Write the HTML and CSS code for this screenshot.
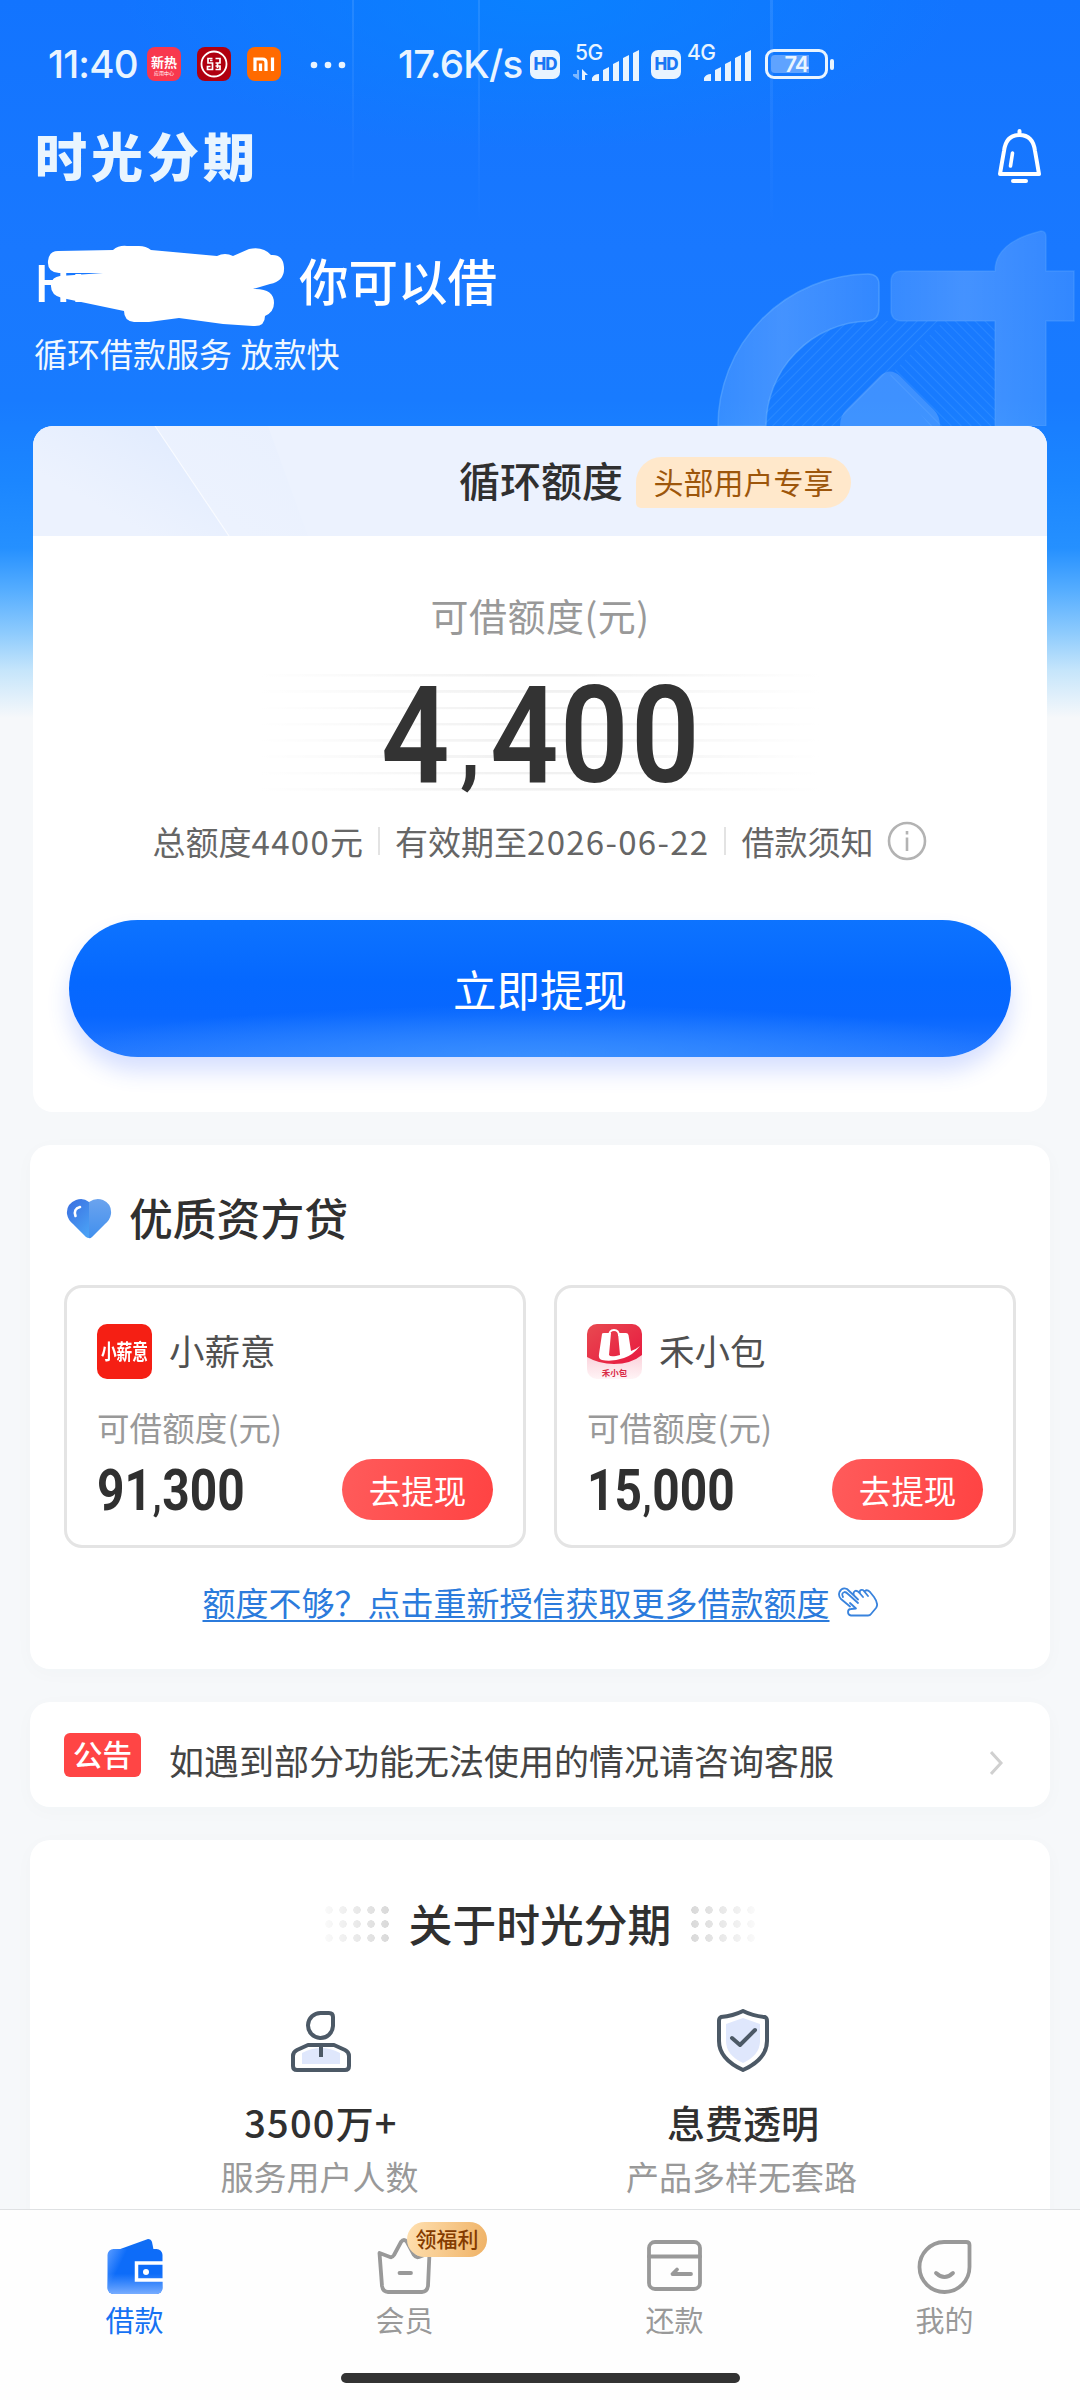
FILE: index.html
```html
<!DOCTYPE html>
<html lang="zh-CN">
<head>
<meta charset="utf-8">
<title>时光分期</title>
<link rel="stylesheet" href="styles.css">
</head>
<body>
<div class="screen">
  <svg class="backdrop" width="1080" height="426" viewBox="0 0 1080 426">
    <defs>
      <linearGradient id="ray" x1="0" y1="0" x2="0" y2="1"><stop offset="0" stop-color="#fff" stop-opacity=".1"/><stop offset="1" stop-color="#fff" stop-opacity="0"/></linearGradient>
      <linearGradient id="mark" x1="0" y1="0" x2="1" y2="0"><stop offset="0" stop-color="#fff" stop-opacity=".13"/><stop offset=".4" stop-color="#fff" stop-opacity=".19"/><stop offset="1" stop-color="#fff" stop-opacity=".11"/></linearGradient>
      <pattern id="hatchA" width="7" height="7" patternUnits="userSpaceOnUse" patternTransform="rotate(45)"><path d="M0 0V7" stroke="#4aa0ff" stroke-width="2" opacity=".35"/></pattern>
      <pattern id="hatchB" width="7" height="7" patternUnits="userSpaceOnUse" patternTransform="rotate(-45)"><path d="M0 0V7" stroke="#4aa0ff" stroke-width="2" opacity=".32"/></pattern>
    </defs>
    <rect x="352" width="2" height="190" fill="url(#ray)"/>
    <rect x="478" width="2" height="225" fill="url(#ray)"/>
    <rect x="770" width="3" height="225" fill="url(#ray)"/>
    <path d="M765 426A105 105 0 0 1 870 321H944L839 426Z" fill="url(#hatchA)"/>
    <path d="M944 321H995V426H930L890 375Z" fill="url(#hatchB)"/>
    <path d="M718 426A152 152 0 0 1 868 274Q879 274 879 285V308Q879 320 868 321A105 105 0 0 0 766 426Z" fill="url(#mark)" stroke="#65b0ff" stroke-opacity=".5" stroke-width="1.5"/>
    <path d="M902 271H995Q995 242 1041 231Q1046 231 1046 237V271H1074V321H1046V426H995V321H902Q891 321 891 310V282Q891 271 902 271Z" fill="url(#mark)" stroke="#65b0ff" stroke-opacity=".28" stroke-width="1.5"/>
    <path d="M840 426Q840 416 846 410L880 376Q890 367 900 376L934 410Q940 416 940 426Z" fill="#fff" fill-opacity=".17"/>
  </svg>

  <div class="status">
    <span class="clock">11:40</span>
    <span class="app app-news"><b>新热</b><i>应用中心</i></span>
    <svg class="app-svg" width="34" height="34" viewBox="0 0 34 34"><rect width="34" height="34" rx="8" fill="#b0000f"/><circle cx="17" cy="17" r="12.5" fill="none" stroke="#fff" stroke-width="1.8"/><path d="M15.500 11.500H11V16H15.500V22.500H10.500V19.500H13.500M18.500 11.500H23V16H18.500M18.500 19H23V22.500H18.500M13 13.500H15.500M20.500 21V16" fill="none" stroke="#fff" stroke-width="1.700"/></svg>
    <svg class="app-svg" width="34" height="34" viewBox="0 0 34 34"><rect width="34" height="34" rx="8" fill="#ff6a00"/><path d="M8 24V12H15.500Q19 12 19 15.500V24M13.500 16.500V24M25.500 10.500V24" fill="none" stroke="#fff" stroke-width="3.200"/></svg>
    <svg class="more" width="36" height="8" viewBox="0 0 36 8"><circle cx="4" cy="4" r="3.300"/><circle cx="18" cy="4" r="3.300"/><circle cx="32" cy="4" r="3.300"/></svg>
    <span class="speed">17.6K/s</span>
    <span class="hd">HD</span>
    <span class="net net-5g">5G
      <svg class="bars" width="66" height="31" viewBox="0 0 66 31"><path d="M4 20L6 20V30L0 26V24H4Z" opacity=".5"/><path d="M9 19L15 25H12V30H9Z"/><path d="M19 31V28Q21 24 26 24V31ZM30 20L36 17V31H30ZM40 14L46 11V31H40ZM50 8L56 5V31H50ZM60 3L66 0V31H60Z"/></svg></span>
    <span class="hd hd-2">HD</span>
    <span class="net net-4g">4G
      <svg class="bars" width="66" height="31" viewBox="0 0 66 31"><path d="M19 31V28Q21 24 26 24V31ZM30 20L36 17V31H30ZM40 14L46 11V31H40ZM50 8L56 5V31H50ZM60 3L66 0V31H60Z"/></svg></span>
    <span class="battery"><span>74</span></span><span class="battery-cap"></span>
  </div>

  <header class="brand">
    <h1 class="logo">时光分期</h1>
    <svg width="45" height="55" viewBox="0 0 45 55" fill="none" stroke="#fff" stroke-width="4" stroke-linejoin="round" stroke-linecap="round"><path d="M22.500 2V6M3 45Q5 33 7 22Q9 6 22.500 6Q36 6 38 22Q40 33 42 45Z"/><path d="M15.500 24L13.500 37" stroke-width="3.600"/><path d="M16 52H29"/></svg>
  </header>

  <section class="hello">
    <div class="greeting">
      <span class="hi">Hi</span><span>你可以借</span>
      <svg class="redaction" width="240" height="84" viewBox="0 0 240 84"><path d="M11 6L66 5Q72 0 80 1H92Q99 1 104 5L170 11Q178 7 186 11L202 4Q216 1 224 10Q236 9 237 22Q238 36 223 39L206 44Q227 43 227 58Q227 67 218 71Q218 82 206 81L176 79L132 73L102 77H87Q77 76 77 66L15 53Q3 50 4 39Q5 32 13 31L56 28H12Q0 27 1 16Q2 6 11 6Z" fill="#fff"/></svg>
    </div>
    <p class="slogan">循环借款服务 放款快</p>
  </section>

  <section class="quota">
    <div class="quota-head">
      <svg class="sheen" width="300" height="110" viewBox="0 0 300 110"><defs><linearGradient id="sh" x1="0" y1="1" x2="1" y2="0"><stop offset=".3" stop-color="#d9e6ff" stop-opacity="0"/><stop offset="1" stop-color="#d3e3fe"/></linearGradient></defs><path d="M0 0H122L196 110H0Z" fill="url(#sh)" opacity=".6"/><path d="M122 0H235L275 110H196Z" fill="url(#sh)" opacity=".15"/><path d="M122 0L196 110" stroke="#fff" stroke-width="1.200" opacity=".7"/></svg>
      <h2>循环额度</h2><span class="vip">头部用户专享</span>
    </div>
    <p class="quota-label">可借额度(元)</p>
    <div class="quota-sum"><span>4</span><span class="comma">,</span><span>4</span><span>0</span><span>0</span></div>
    <div class="quota-info">
      <span>总额度<em>4400</em>元</span><i></i><span>有效期至<em>2026-06-22</em></span><i></i><span>借款须知</span>
      <svg width="40" height="40" viewBox="0 0 40 40" fill="none" stroke="#b3b3b3" stroke-width="2.600"><circle cx="20" cy="20" r="18"/><path d="M20 16.500V30M20 10V13.500"/></svg>
    </div>
    <button class="withdraw">立即提现</button>
  </section>

  <section class="panel lenders">
    <div class="panel-title">
      <svg width="46" height="42" viewBox="0 0 46 42"><defs><linearGradient id="h1" x1="0" y1="0" x2=".7" y2="1"><stop offset="0" stop-color="#3a6ee0"/><stop offset="1" stop-color="#4aa0f5"/></linearGradient><linearGradient id="h2" x1="0" y1="0" x2="0" y2="1"><stop offset="0" stop-color="#6ba3ee"/><stop offset="1" stop-color="#4190ee"/></linearGradient></defs><path d="M23 4Q17-1 10 2Q0 6 1 16Q2 22 7 26L20 39Q23 41 25 39V4Z" fill="url(#h1)"/><path d="M23 4Q30-1 37 2Q46 6 45 16Q44 22 39 26L26 39Q24 41 23 40Z" fill="url(#h2)"/><path d="M14 9Q7 11 9.500 18" stroke="#fff" stroke-width="2.600" fill="none" stroke-linecap="round"/></svg>
      <h2>优质资方贷</h2>
    </div>
    <div class="lender-grid">
      <article class="lender">
        <div class="lender-name"><span class="lender-icon"><b>小薪意</b></span><h3>小薪意</h3></div>
        <p>可借额度(元)</p>
        <div class="lender-foot"><strong>91<u>,</u>300</strong><button>去提现</button></div>
      </article>
      <article class="lender">
        <div class="lender-name"><svg width="55" height="55" viewBox="0 0 55 55"><defs><clipPath id="rr"><rect width="55" height="55" rx="10"/></clipPath><linearGradient id="rd" x1="0" y1="0" x2="1" y2="1"><stop offset="0" stop-color="#e84a50"/><stop offset="1" stop-color="#e8173f"/></linearGradient><linearGradient id="pk" x1="0" y1="0" x2="0" y2="1"><stop offset=".6" stop-color="#fbd5dd"/><stop offset="1" stop-color="#fff4f6"/></linearGradient></defs><g clip-path="url(#rr)"><rect width="55" height="55" fill="url(#pk)"/><path d="M0 0H55V31Q44 40 27 40Q12 40 0 33Z" fill="url(#rd)"/></g><path d="M15 10Q15 9 17 9H24L22 31Q23 33 29 32L33 31L31 9H39Q41 9 41.500 11L44 27Q48 26 53 22Q46 31 37 34Q25 38 15 36Q11 35 12 30Z" fill="#fff"/><path d="M22 12Q22 6 27 6Q32 6 32 12" fill="none" stroke="#fff" stroke-width="1.800"/><text x="27.500" y="52" text-anchor="middle" class="tiny">禾小包</text></svg><h3>禾小包</h3></div>
        <p>可借额度(元)</p>
        <div class="lender-foot"><strong>15<u>,</u>000</strong><button>去提现</button></div>
      </article>
    </div>
    <div class="more-quota"><a>额度不够？点击重新授信获取更多借款额度</a>
      <svg width="40" height="30" viewBox="0 0 40 30" fill="none" stroke="#3983dd" stroke-width="1.800" stroke-linecap="round" stroke-linejoin="round"><path d="M12 19.500L3 12Q0 9 1.500 5Q4 0 9 2L17 9.500M5 10Q3 6 6.500 5Q8 5 10 7L20 16M17 9.500Q14 6 17 4Q19 3 22 6.500M22 6.500Q21 2 25 3L28 6.500M27 4Q29 2 32 5L36 10Q41 17 38 21L33 27Q32 28.500 30 28.500H13Q10 28 10 25Q10 22 13 22L18 21.500L12 16M17 9.500L20 12.500M22 6.500L25 10M28 6.500L30 9"/></svg>
    </div>
  </section>

  <section class="panel notice">
    <span class="tag">公告</span><p>如遇到部分功能无法使用的情况请咨询客服</p>
    <svg width="14" height="26" viewBox="0 0 14 26" fill="none" stroke="#d0d0d0" stroke-width="3"><path d="M1 2L11 13L1 24"/></svg>
  </section>

  <section class="panel about">
    <div class="about-title"><span class="dots"></span><h2>关于时光分期</h2><span class="dots dots-right"></span></div>
    <div class="features">
      <div class="feature">
        <svg width="60" height="64" viewBox="0 0 60 64" fill="none" stroke="#4c5966" stroke-width="4" stroke-linejoin="round"><path d="M30 4H38Q42 4 42 8V17A12.500 12.500 0 1 1 30 4Z"/><path d="M11 44Q30 34 49 44V55H11Z" fill="#dfe7fc" stroke="none"/><path d="M17 36H43L54 41Q58 43 58 47V57Q58 61 54 61H6Q2 61 2 57V47Q2 43 6 41ZM30 36V48"/></svg>
        <h3 class="count">3500万+</h3><p>服务用户人数</p>
      </div>
      <div class="feature">
        <svg width="60" height="64" viewBox="0 0 60 64" fill="none" stroke="#4c5966" stroke-width="4" stroke-linejoin="round" stroke-linecap="round"><path d="M30 9L47 15V32Q47 46 30 54Q13 46 13 32V15Z" fill="#dfe7fc" stroke="none"/><path d="M30 2Q40 7 52 8Q54 9 54 12V32Q54 50 30 61Q6 50 6 32V12Q6 9 8 8Q20 7 30 2Z"/><path d="M19 29L27 36L42 21"/></svg>
        <h3>息费透明</h3><p>产品多样无套路</p>
      </div>
    </div>
  </section>

  <nav class="tabbar">
    <div class="tabs">
      <div class="tab active">
        <svg width="58" height="60" viewBox="0 0 58 60"><defs><linearGradient id="w" x1="0" y1=".2" x2=".25" y2=".3"><stop offset="0" stop-color="#4a92ff"/><stop offset="1" stop-color="#0d6cf9"/></linearGradient><linearGradient id="w2" x1="0" y1="0" x2="0" y2="1"><stop offset=".55" stop-color="#69a5ff" stop-opacity="0"/><stop offset="1" stop-color="#78adff"/></linearGradient></defs><path d="M6 16L42 3Q45 3 46 6L48 16Z" fill="#0f6df5"/><rect x="1.500" y="13" width="55" height="45" rx="6" fill="url(#w)"/><rect x="1.500" y="13" width="55" height="45" rx="6" fill="url(#w2)"/><path d="M57 27H30.500V44H57" fill="none" stroke="#fff" stroke-width="3.500"/><circle cx="40" cy="36" r="3" fill="#fff"/></svg>
        <span>借款</span></div>
      <div class="tab">
        <svg width="58" height="60" viewBox="0 0 58 60" fill="none" stroke="#999" stroke-width="3.800" stroke-linejoin="round" stroke-linecap="round"><path d="M3.500 17L14 21Q16 22 18 19L25 6Q28 2 31 6L38 19Q40 22 43 21L53.500 17L52 50Q51 56 46 56H12Q7 56 6 50Z"/><path d="M23.500 37H35"/></svg>
        <span>会员</span><b class="bubble">领福利</b></div>
      <div class="tab">
        <svg width="58" height="60" viewBox="0 0 58 60" fill="none" stroke="#999" stroke-width="3.800" stroke-linejoin="round" stroke-linecap="round"><rect x="3" y="6" width="51" height="47" rx="6"/><path d="M3 20.500H54M45 38H26.500L31 33.500"/></svg>
        <span>还款</span></div>
      <div class="tab">
        <svg width="58" height="60" viewBox="0 0 58 60" fill="none" stroke="#999" stroke-width="3.800" stroke-linejoin="round" stroke-linecap="round"><path d="M28 6H50Q53.500 6 53.500 9V31A25 25 0 1 1 28 6Z"/><path d="M20 37Q28.500 45 37 37"/></svg>
        <span>我的</span></div>
    </div>
    <div class="home-bar"></div>
  </nav>
</div>
</body>
</html>
```
FILE: styles.css
```css
* { box-sizing: border-box; margin: 0; padding: 0; }
html, body { width: 1080px; height: 2400px; overflow: hidden; }
body { font-family: "Noto Sans CJK SC", sans-serif; color: #303030; }
svg { display: block; flex: none; }
h1, h2, h3 { font-weight: 500; }
button { border: 0; font-family: inherit; color: #fff; display: block; }
em, i { font-style: normal; }

.screen {
  position: relative;
  width: 1080px;
  height: 2400px;
  overflow: hidden;
  display: flex;
  flex-direction: column;
  background:
    radial-gradient(ellipse 420px 150px at 540px 0, rgba(8, 132, 255, .8), rgba(8, 132, 255, 0)),
    linear-gradient(180deg, #1274ff 0, #1978ff 250px, #187bff 400px, #1b86ff 480px, #2590ff 548px, #55adff 590px, #8ccafd 632px, #c5e5fb 670px, #f6f8fa 718px);
}
.backdrop { position: absolute; left: 0; top: 0; }

/* Status bar */
.status { position: relative; height: 128px; padding: 47px 0 0 48px; display: flex; align-items: flex-start; color: #e9f4ff; fill: #e9f4ff; font-family: Inter, sans-serif; }
.clock { width: 99px; font-size: 38.5px; line-height: 35px; font-weight: 500; letter-spacing: -.8px; white-space: nowrap; }
.app { width: 34px; height: 34px; border-radius: 8px; background: #f8384e; color: #fff; font-family: "Noto Sans CJK SC", sans-serif; text-align: center; overflow: hidden; }
.app b { display: block; font-size: 13px; line-height: 17px; padding-top: 6px; font-weight: 700; }
.app i { display: block; font-size: 5px; line-height: 6px; }
.app-svg { margin-left: 16px; }
.more { margin: 14px 0 0 29px; }
.speed { margin-left: 52px; width: 132px; font-size: 38.5px; line-height: 35px; font-weight: 500; letter-spacing: -.7px; white-space: nowrap; }
.hd { width: 30px; height: 29px; margin-top: 3px; border-radius: 7px; background: #e9f4ff; color: #1877f5; font-size: 17px; line-height: 29px; font-weight: 800; text-align: center; letter-spacing: -1px; }
.net { position: relative; width: 65px; height: 36px; font-size: 21px; line-height: 20px; font-weight: 500; letter-spacing: -.6px; margin-top: -4px; }
.net-5g { margin-left: 15px; }
.hd-2 { margin-left: 11px; }
.net-4g { margin-left: 6px; }
.bars { position: absolute; right: 1px; top: 7px; }
.battery { margin: 2px 0 0 13px; width: 63px; height: 30px; border: 3px solid #e9f4ff; border-radius: 9px; padding: 3px; }
.battery span { display: block; height: 18px; border-radius: 4px; background: linear-gradient(90deg, #5fa3ff 74%, transparent 74%); font-size: 22px; line-height: 19px; font-weight: 600; text-align: center; letter-spacing: -1px; }
.battery-cap { width: 4px; height: 11px; margin: 12px 0 0 2px; border-radius: 2px; background: #e9f4ff; }

/* Brand row */
.brand { position: relative; height: 60px; padding: 0 38px 0 35px; display: flex; justify-content: space-between; }
.logo { font-size: 52px; line-height: 53px; font-weight: 900; color: #e9f5ff; letter-spacing: 4px; }
.brand svg { margin-top: 1px; }

.hello { position: relative; height: 238px; padding: 62px 34px 0; color: #fff; }
.greeting { position: relative; display: flex; height: 62px; line-height: 60px; font-size: 49.5px; font-weight: 500; white-space: nowrap; }
.hi { width: 265px; font-size: 50px; }
.redaction { position: absolute; left: 13px; top: -5px; }
.slogan { margin-top: 19px; font-size: 33px; line-height: 44px; color: #f0f8ff; word-spacing: 1px; }

/* Credit card */
.quota { position: relative; margin: 0 33px; height: 686px; border-radius: 20px; overflow: hidden; background: #fff; display: flex; flex-direction: column; align-items: center; }
.quota-head { position: relative; width: 100%; height: 110px; padding-left: 426px; display: flex; align-items: center; background: #ecf2fe; }
.sheen { position: absolute; left: 0; top: 0; }
.quota-head h2 { position: relative; top: -2px; font-size: 41px; line-height: 50px; }
.vip { position: relative; margin: 2px 0 0 13px; width: 215px; height: 51px; border-radius: 26px 26px 26px 5px; background: #ffe8cb; color: #9d560b; font-size: 30px; line-height: 48px; text-align: center; }
.quota-label { margin-top: 55px; font-size: 38px; line-height: 48px; color: #999; letter-spacing: .5px; }
.quota-sum { margin-top: 35px; width: 560px; height: 118px; padding-top: 2px; display: flex; justify-content: center; font-family: Roboto, sans-serif; font-size: 135px; line-height: 120px; font-weight: 600; color: #333;
  background: linear-gradient(90deg, #fff, transparent 45%, transparent 55%, #fff), repeating-linear-gradient(180deg, #f1f1f1 0, #f1f1f1 2px, #fff 3px, #fff 16.300px); }
.quota-sum span { width: 70.5px; display: flex; justify-content: center; transform: scaleX(.89); }
.quota-sum .comma { width: 38px; font-size: 96px; line-height: 134px; }
.quota-info { margin-top: 27px; height: 44px; display: flex; align-items: center; font-size: 33px; color: #666; white-space: nowrap; }
.quota-info span { position: relative; }
.quota-info em { letter-spacing: 1.300px; }
.quota-info i { width: 2px; height: 28px; margin: 0 15px; background: #e3e3e3; }
.quota-info svg { margin-left: 14px; }
.withdraw { margin-top: 57px; width: 942px; height: 137px; border-radius: 69px; font-size: 43.5px; line-height: 131px; text-align: center;
  background: radial-gradient(ellipse 55% 42% at 50% 104%, #3b91ff, rgba(59, 145, 255, 0)), linear-gradient(180deg, #0d73ff, #0568ff 45%, #0867ff 70%, #2377ff);
  box-shadow: 0 14px 22px rgba(50, 95, 255, .2); }

/* White panels */
.panel { position: relative; margin: 33px 30px 0; border-radius: 20px; background: #fff; box-shadow: 0 4px 20px rgba(50, 70, 100, .025); flex: none; }
.lenders { height: 524px; padding: 47px 34px 0; }
.panel-title { display: flex; align-items: center; height: 54px; padding-left: 2px; }
.panel-title h2 { margin-left: 17px; font-size: 43.800px; line-height: 54px; position: relative; top: -2px; }
.lender-grid { margin-top: 39px; display: grid; grid-template-columns: 462px 462px; gap: 28px; }
.lender { height: 263px; border: 3px solid #e4e4e4; border-radius: 18px; padding: 36px 30px 0; }
.lender-name { height: 55px; display: flex; align-items: center; }
.lender-icon { width: 55px; height: 55px; border-radius: 10px; background: #f51f14; color: #fff; line-height: 53px; display: flex; justify-content: center; }
.lender-icon b { flex: none; font-size: 21px; font-weight: 700; transform: scaleX(.75); }
.lender-name h3 { margin-left: 17px; font-size: 35.500px; font-weight: 400; line-height: 50px; color: #505050; position: relative; top: -2px; }
.tiny { font-size: 8.500px; font-weight: 700; fill: #d92a45; }
.lender p { margin-top: 26px; font-size: 32.500px; line-height: 44px; color: #999; letter-spacing: .1px; }
.lender-foot { margin-top: 10px; display: flex; justify-content: space-between; height: 61px; }
.lender-foot strong { width: 170px; font-family: Roboto, sans-serif; font-weight: 700; font-size: 57px; line-height: 64px; color: #303030; transform: scaleX(.84); transform-origin: left; }
.lender-foot u { text-decoration: none; font-size: 42px; margin: 0 1px; }
.lender-foot button { width: 151px; height: 61px; border-radius: 31px; background: linear-gradient(100deg, #ff5b5b, #ff4343); font-size: 32.500px; line-height: 55px; text-align: center; }
.more-quota { margin-top: 30px; height: 48px; display: flex; justify-content: center; align-items: center; color: #2b7bdc; }
.more-quota a { font-size: 33px; line-height: 44px; text-decoration: underline; text-decoration-thickness: 2px; text-underline-offset: 4px; }
.more-quota svg { margin-left: 8px; }

.notice { height: 105px; padding: 0 46px 0 34px; display: flex; align-items: center; }
.tag { align-self: flex-start; width: 77px; height: 44px; margin-top: 31px; border-radius: 6px; background: #ff4545; color: #fff; font-size: 29.500px; line-height: 41px; text-align: center; font-weight: 500; }
.notice p { margin: 11px auto 0 28px; font-size: 35px; line-height: 48px; color: #444; }
.notice svg { margin-top: 16px; }

.about { height: 500px; padding-top: 54px; }
.about-title { display: flex; justify-content: center; align-items: center; height: 60px; }
.about-title h2 { font-size: 43.800px; line-height: 56px; margin: 0 17px; position: relative; top: -1px; }
.dots { width: 70px; height: 42px; background: radial-gradient(circle 4px at 7px 7px, #d8d8d8 3.500px, transparent 4px) 0 0 / 14px 14px; -webkit-mask-image: linear-gradient(90deg, rgba(0,0,0,.1), #000); mask-image: linear-gradient(90deg, rgba(0,0,0,.1), #000); }
.dots-right { transform: scaleX(-1); }
.features { margin-top: 55px; display: grid; grid-template-columns: 422px 422px; padding-left: 80px; }
.feature { display: flex; flex-direction: column; align-items: center; white-space: nowrap; }
.feature h3 { margin-top: 24px; font-size: 38px; line-height: 50px; }
.feature .count { letter-spacing: 1.200px; }
.feature p { margin-top: 6px; margin-left: -3px; font-size: 33px; line-height: 46px; color: #999; }

/* Bottom navigation */
.tabbar { position: absolute; left: 0; right: 0; bottom: 0; height: 191px; background: #fefefe; border-top: 1px solid #dfe1e3; }
.tabs { display: grid; grid-template-columns: repeat(4, 1fr); height: 163px; padding-top: 26px; }
.tab { position: relative; display: flex; flex-direction: column; align-items: center; color: #999; }
.tab span { margin-top: 3px; margin-left: -1px; font-size: 29px; line-height: 40px; }
.tab.active { color: #1672f3; }
.bubble { position: absolute; left: 137px; top: -14px; width: 80px; height: 35px; border-radius: 18px; background: linear-gradient(100deg, #ffe0b0, #efb266); color: #843b00; font-size: 21px; line-height: 32px; font-weight: 500; text-align: center; }
.home-bar { width: 399px; height: 10px; margin: 0 auto; border-radius: 5px; background: #333; }
```
